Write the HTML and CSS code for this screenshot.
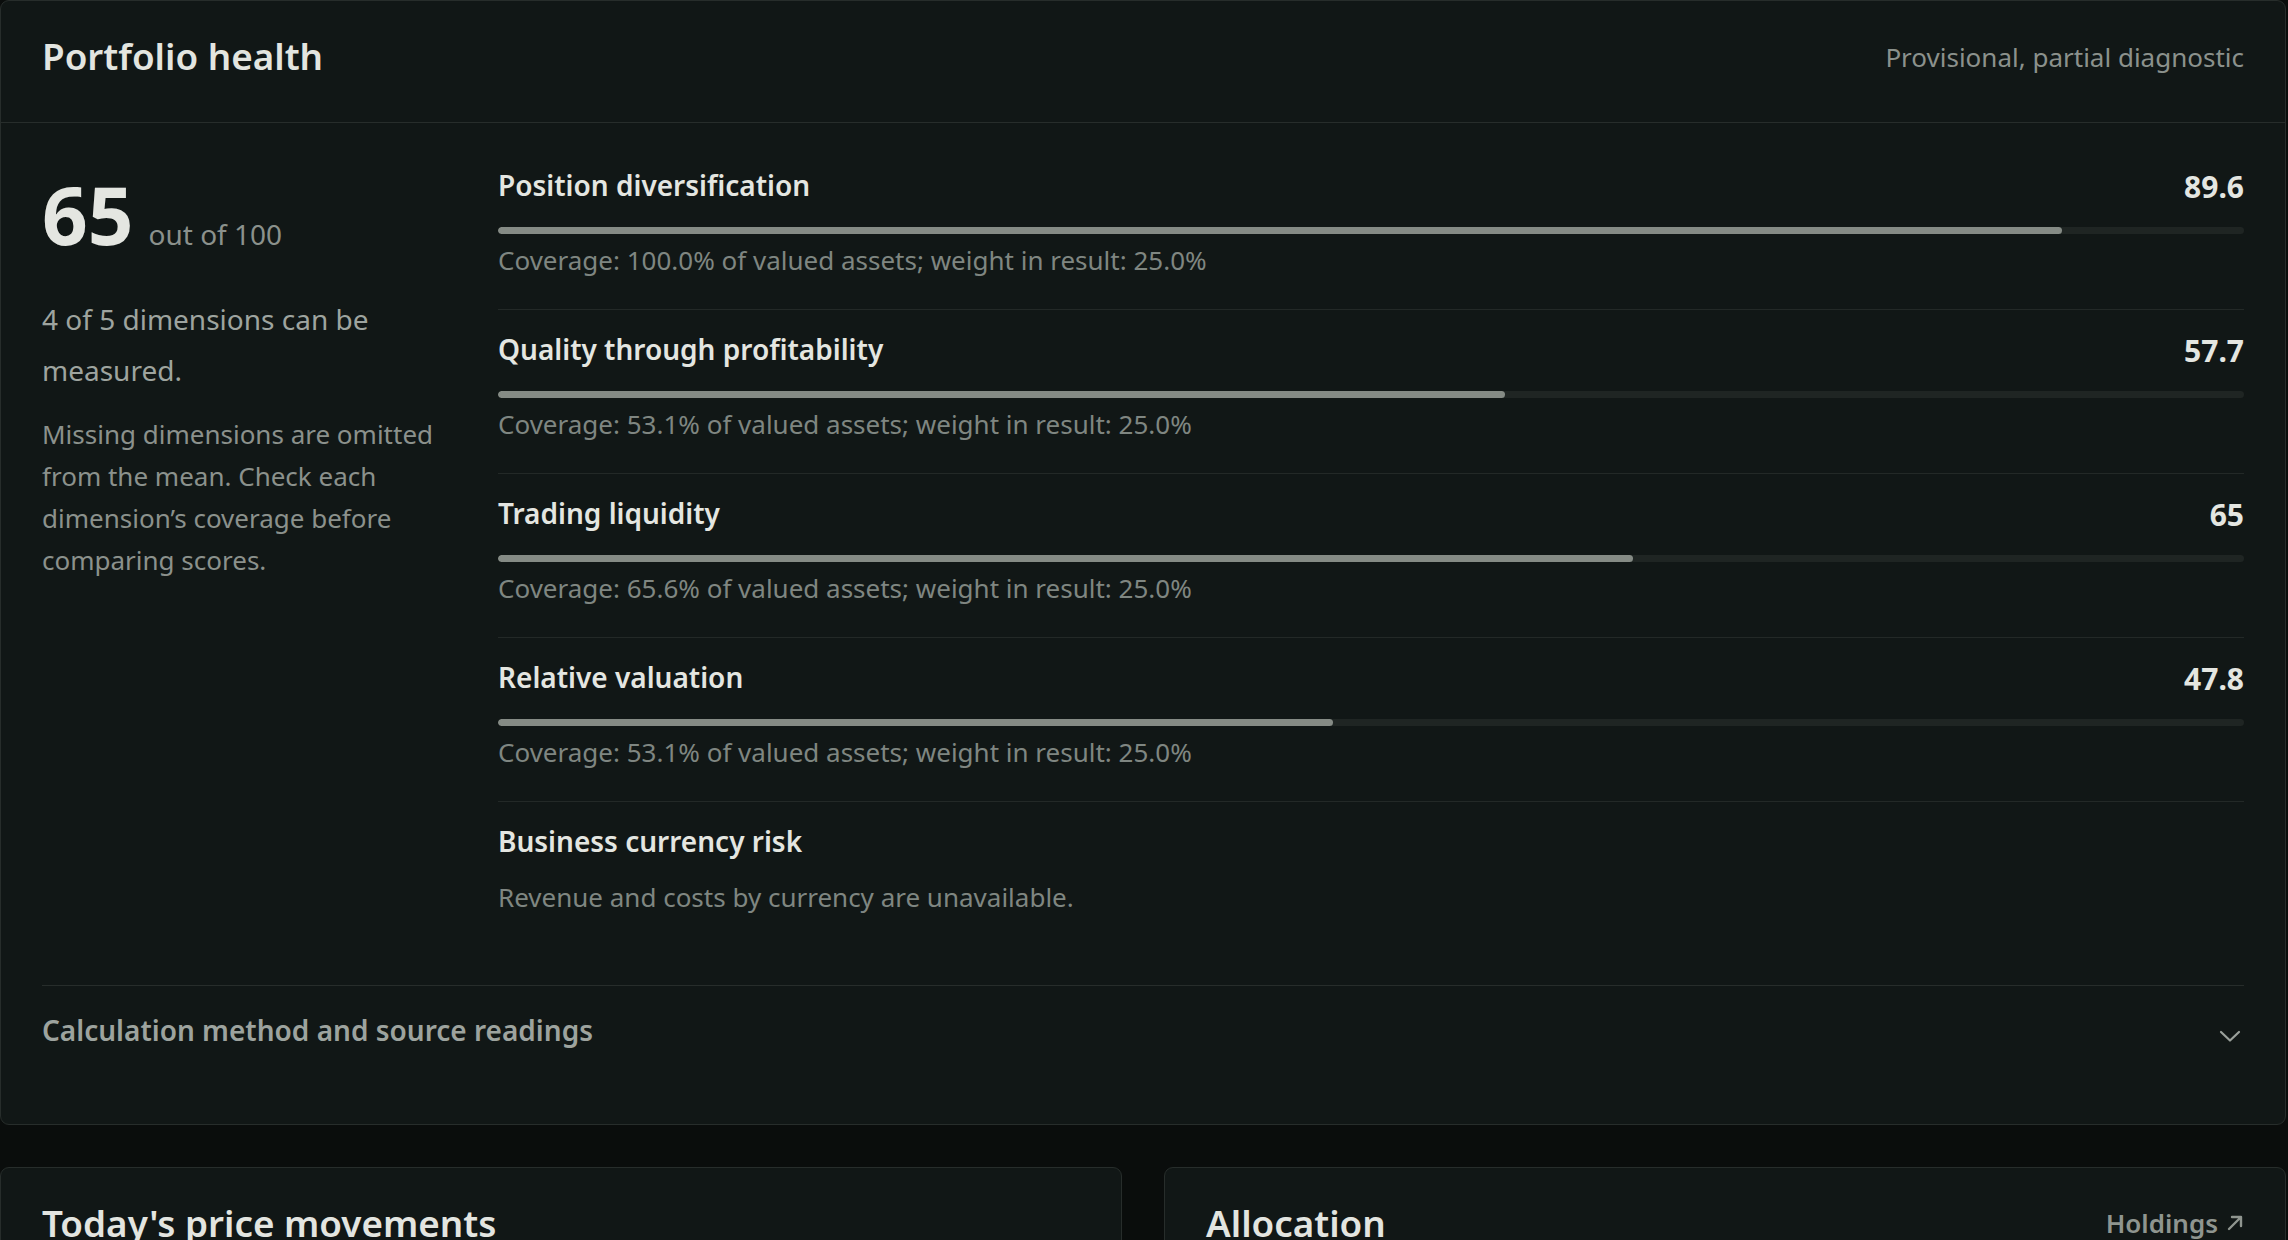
FILE: index.html
```html
<!DOCTYPE html>
<html lang="en">
<head>
<meta charset="utf-8">
<title>Portfolio health</title>
<link rel="stylesheet" href="styles.css">
</head>
<body>
<div class="page">
  <section class="card">
    <header class="card-head">
      <h2 class="card-title">Portfolio health</h2>
      <span class="head-note">Provisional, partial diagnostic</span>
    </header>
    <div class="card-body">
      <div class="health-grid">
        <div class="score-col">
          <div class="score">
            <span class="score-num">65</span>
            <span class="score-of">out of 100</span>
          </div>
          <p class="score-summary">4 of 5 dimensions can be measured.</p>
          <p class="score-note">Missing dimensions are omitted from the mean. Check each dimension’s coverage before comparing scores.</p>
        </div>
        <ul class="dims">
          <li class="dim">
            <div class="dim-head"><span class="dim-label">Position diversification</span><span class="dim-value">89.6</span></div>
            <div class="bar"><div class="bar-fill" style="width:89.6%"></div></div>
            <p class="dim-note">Coverage: 100.0% of valued assets; weight in result: 25.0%</p>
          </li>
          <li class="dim">
            <div class="dim-head"><span class="dim-label">Quality through profitability</span><span class="dim-value">57.7</span></div>
            <div class="bar"><div class="bar-fill" style="width:57.7%"></div></div>
            <p class="dim-note">Coverage: 53.1% of valued assets; weight in result: 25.0%</p>
          </li>
          <li class="dim">
            <div class="dim-head"><span class="dim-label">Trading liquidity</span><span class="dim-value">65</span></div>
            <div class="bar"><div class="bar-fill" style="width:65%"></div></div>
            <p class="dim-note">Coverage: 65.6% of valued assets; weight in result: 25.0%</p>
          </li>
          <li class="dim">
            <div class="dim-head"><span class="dim-label">Relative valuation</span><span class="dim-value">47.8</span></div>
            <div class="bar"><div class="bar-fill" style="width:47.8%"></div></div>
            <p class="dim-note">Coverage: 53.1% of valued assets; weight in result: 25.0%</p>
          </li>
          <li class="dim dim-missing">
            <div class="dim-head"><span class="dim-label">Business currency risk</span></div>
            <p class="dim-note">Revenue and costs by currency are unavailable.</p>
          </li>
        </ul>
      </div>
      <details class="method">
        <summary class="method-summary">
          <span>Calculation method and source readings</span>
          <svg class="chevron" width="24" height="14" viewBox="0 0 24 14" aria-hidden="true"><polyline points="3,3 12,11.5 21,3" fill="none" stroke="currentColor" stroke-width="2.2" stroke-linecap="round" stroke-linejoin="round"/></svg>
        </summary>
        <p class="method-text">Each dimension is scored from 0 to 100 and averaged with equal weights.</p>
      </details>
    </div>
  </section>

  <div class="card-row">
    <section class="card card-tall">
      <header class="card-head">
        <h2 class="card-title">Today's price movements</h2>
      </header>
    </section>
    <section class="card card-tall">
      <header class="card-head">
        <h2 class="card-title">Allocation</h2>
        <a class="head-link" href="#">Holdings
          <svg class="link-arrow" width="18" height="18" viewBox="0 0 18 18" aria-hidden="true"><path d="M3 15L15 3M6 3h9v9" fill="none" stroke="currentColor" stroke-width="2.4" stroke-linecap="round" stroke-linejoin="round"/></svg>
        </a>
      </header>
    </section>
  </div>
</div>
</body>
</html>
```

FILE: styles.css
```css
* { box-sizing: border-box; }

html, body {
  margin: 0;
  padding: 0;
  background: #0a0d0c;
}

body {
  font-family: "Noto Sans", "Open Sans", "DejaVu Sans", sans-serif;
  color: #e4e6e1;
}

.page {
  width: 2286px;
  display: flex;
  flex-direction: column;
  gap: 42px;
}

.card {
  background: #111716;
  border: 1px solid #272d2b;
  border-radius: 9px;
}

.card-head {
  display: flex;
  align-items: center;
  justify-content: space-between;
  padding: 29px 41px 40px;
  border-bottom: 1px solid #272d2b;
}

.card-title {
  margin: 0;
  font-size: 36.8px;
  line-height: 52px;
  font-weight: 600;
  color: #e3e5e0;
}

.head-note {
  font-size: 26px;
  line-height: 39px;
  color: #8b918c;
  margin-top: 2px;
}

.head-link {
  display: flex;
  align-items: center;
  gap: 8px;
  font-size: 26px;
  line-height: 39px;
  font-weight: 600;
  color: #8f958f;
  text-decoration: none;
}

.link-arrow { display: block; }

.card-body {
  padding: 41px 41px 42px;
}

.health-grid {
  display: grid;
  grid-template-columns: 412px 1fr;
  column-gap: 44px;
  margin-bottom: 39px;
}

.score {
  display: flex;
  align-items: baseline;
  margin-top: 8px;
}

.score-num {
  font-size: 80px;
  line-height: 84px;
  font-weight: 700;
  color: #e4e6e1;
}

.score-of {
  margin-left: 15px;
  font-size: 28px;
  color: #8b918c;
}

.score-summary {
  margin: 38px 0 0;
  font-size: 28px;
  line-height: 51px;
  color: #9ea49f;
}

.score-note {
  margin: 17px 0 0;
  font-size: 26px;
  line-height: 42px;
  color: #8b918c;
}

.dims {
  list-style: none;
  margin: 0;
  padding: 0;
}

.dim {
  padding: 18px 0 29px;
  border-bottom: 1px solid #232927;
}

.dim:first-child { padding-top: 0; }

.dim:last-child { border-bottom: none; }

.dim-head {
  display: flex;
  align-items: center;
  justify-content: space-between;
  height: 42px;
}

.dim-label {
  font-size: 28px;
  line-height: 42px;
  font-weight: 600;
  color: #e4e6e1;
}

.dim-value {
  font-size: 30px;
  line-height: 42px;
  font-weight: 700;
  color: #e4e6e1;
  margin-top: 3px;
}

.bar {
  margin-top: 21px;
  height: 7px;
  border-radius: 4px;
  background: #1f2523;
  overflow: hidden;
}

.bar-fill {
  height: 100%;
  border-radius: 4px;
  background: #858b85;
}

.dim-note {
  margin: 7px 0 0;
  font-size: 26px;
  line-height: 39px;
  color: #7f8681;
}

.dim-missing .dim-note { margin-top: 16px; }

.method {
  border-top: 1px solid #272d2b;
}

.method-summary {
  list-style: none;
  display: flex;
  align-items: center;
  justify-content: space-between;
  padding: 23px 0 31px;
  font-size: 28px;
  line-height: 42px;
  font-weight: 600;
  color: #9da39e;
  cursor: pointer;
}

.method-summary::-webkit-details-marker { display: none; }

.chevron {
  display: block;
  margin-top: 12px;
  margin-right: 2px;
  color: #9aa09b;
}

.method-text {
  margin: 0 0 20px;
  font-size: 26px;
  color: #8b918c;
}

.card-row {
  display: grid;
  grid-template-columns: 1fr 1fr;
  gap: 42px;
}

.card-tall {
  min-height: 420px;
}
```
